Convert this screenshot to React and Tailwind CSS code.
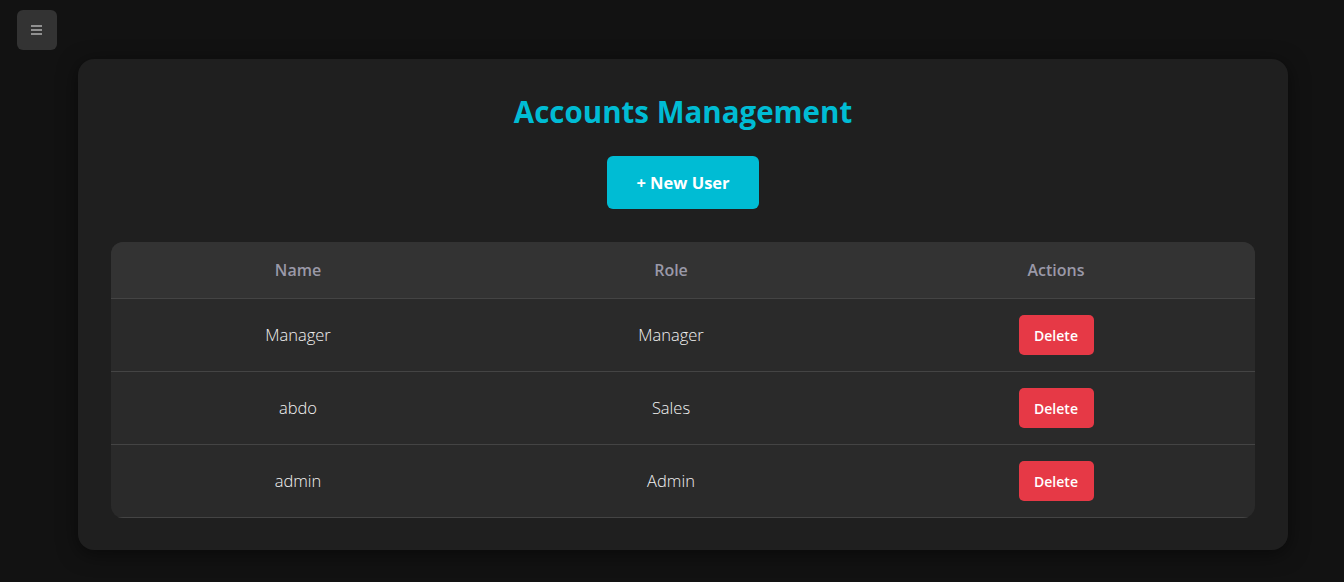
export default function App() {
  const rows = [
    { name: "Manager", role: "Manager" },
    { name: "abdo", role: "Sales" },
    { name: "admin", role: "Admin" },
  ];
  return (
    <div className="min-h-[582px] w-full bg-[#121212] font-['Open_Sans','Noto_Sans',sans-serif]">
      <div className="pl-[17px] pt-[10px]">
        <button className="flex h-[40px] w-[40px] items-center justify-center rounded-md bg-[#333333] text-[#eeeeee]">
          <svg width="12" height="10" viewBox="0 0 12 10">
            <rect x="0" y="0.5" width="11" height="1" fill="#f0f0f0" />
            <rect x="0" y="4.5" width="11" height="1" fill="#f0f0f0" />
            <rect x="0" y="8.5" width="11" height="1" fill="#f0f0f0" />
          </svg>
        </button>
      </div>
      <div className="ml-[78px] mt-[9px] w-[1210px] rounded-2xl bg-[#1f1f1f] px-[33px] pb-[32px] pt-[33px] shadow-[0_4px_20px_rgba(0,0,0,0.5)]">
        <h1 className="text-center text-[29.5px] font-bold leading-[40px] text-[#00bcd4]">
          Accounts Management
        </h1>
        <div className="mt-[24px] flex justify-center">
          <button className="h-[53px] w-[152px] rounded-md bg-[#00bcd4] pt-[2px] text-[16.5px] font-bold text-white">
            + New User
          </button>
        </div>
        <div className="mt-[33px] overflow-hidden rounded-xl bg-[#2a2a2a]">
          <div className="grid h-[57px] grid-cols-[374px_372px_397px] items-center border-b border-[#444444] bg-[#333333] text-center text-[16px] font-semibold text-[#9a99a8]">
            <div>Name</div>
            <div>Role</div>
            <div className="pl-[1px]">Actions</div>
          </div>
          {rows.map((r) => (
            <div
              key={r.name}
              className="grid h-[73px] grid-cols-[374px_372px_397px] items-center border-b border-[#444444] text-center text-[16.5px] font-light text-[#f2f2f2]"
            >
              <div>{r.name}</div>
              <div>{r.role}</div>
              <div className="flex justify-center pl-[1px]">
                <button className="h-[40px] w-[75px] rounded-[5px] bg-[#e63946] text-[14px] font-semibold text-white">
                  Delete
                </button>
              </div>
            </div>
          ))}
        </div>
      </div>
    </div>
  );
}
